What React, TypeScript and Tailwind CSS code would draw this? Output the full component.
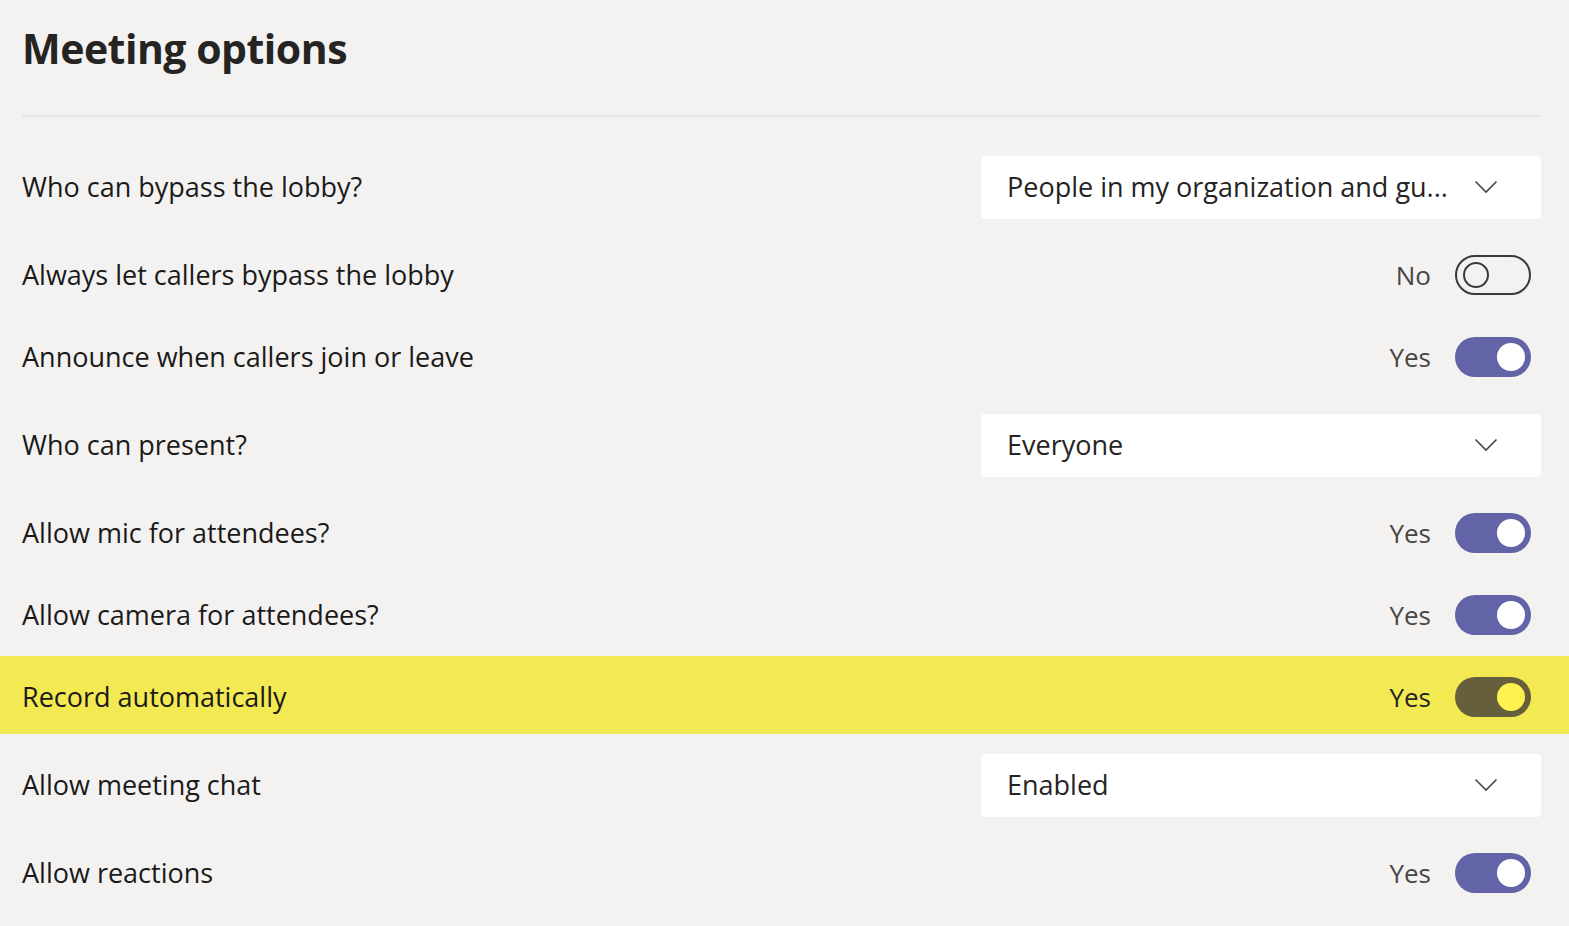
import { useState } from "react"

type row = {
    label: string,
    kind: "select" | "toggle",
    value?: string,
    on?: boolean,
    highlight?: boolean
}

const rows: row[] = [
    { label: "Who can bypass the lobby?", kind: "select", value: "People in my organization and gu..." },
    { label: "Always let callers bypass the lobby", kind: "toggle", on: false },
    { label: "Announce when callers join or leave", kind: "toggle", on: true },
    { label: "Who can present?", kind: "select", value: "Everyone" },
    { label: "Allow mic for attendees?", kind: "toggle", on: true },
    { label: "Allow camera for attendees?", kind: "toggle", on: true },
    { label: "Record automatically", kind: "toggle", on: true, highlight: true },
    { label: "Allow meeting chat", kind: "select", value: "Enabled" },
    { label: "Allow reactions", kind: "toggle", on: true },
]

function Chevron() {
    return (
        <svg width="24" height="14" viewBox="0 0 24 14" fill="none">
            <path d="M1.5 1.5 L12 12 L22.5 1.5" stroke="#484644" strokeWidth="1.6" />
        </svg>
    )
}

function Toggle({ on, highlight }: { on: boolean, highlight?: boolean }) {
    if (!on) {
        return (
            <div className="w-[76px] h-[40px] rounded-full border-2 border-[#3b3a39] flex items-center pl-[6px]">
                <div className="w-[26px] h-[26px] rounded-full border-2 border-[#3b3a39]" />
            </div>
        )
    }
    return (
        <div className={`w-[76px] h-[40px] rounded-full flex items-center justify-end pr-[6px] ${highlight ? "bg-[#655f3b]" : "bg-[#6264a7]"}`}>
            <div className={`w-[28px] h-[28px] rounded-full ${highlight ? "bg-[#fff24f]" : "bg-white"}`} />
        </div>
    )
}

export default function App() {
    const [items] = useState(rows)

    return (
        <div className="min-h-screen bg-[#f3f2f1] text-[#252423] font-['Open_Sans',sans-serif] overflow-hidden">
            <div className="pl-[22px] pr-[28px] pt-[20px]">
                <div className="text-[41px] font-bold leading-[56px] tracking-[-0.5px]">Meeting options</div>
                <div className="mt-[39px] h-[2px] bg-[#e8e6e4]" />
            </div>
            <div className="pt-[23px]">
                {items.map((r, i) => {
                    if (r.kind == "select") {
                        return (
                            <div key={i} className="h-[94px] flex items-center pl-[22px] pr-[28px]">
                                <div className="flex-1 text-[27px] text-[#1b1a19]">{r.label}</div>
                                <div className="w-[560px] h-[63px] bg-white rounded-[4px] flex items-center justify-between pl-[26px] pr-[43px]">
                                    <span className="text-[27px]">{r.value}</span>
                                    <Chevron />
                                </div>
                            </div>
                        )
                    }
                    return (
                        <div key={i} className={r.highlight ? "h-[82px] pb-[4px]" : "h-[82px]"}>
                            <div className={`h-full flex items-center pl-[22px] pr-[38px] ${r.highlight ? "bg-[#f3e952] pt-[4px]" : ""}`}>
                                <div className="flex-1 text-[27px] text-[#1b1a19]">{r.label}</div>
                                <span className={`text-[26px] mr-[24px] ${r.highlight ? "text-[#252423]" : "text-[#484644]"}`}>{r.on ? "Yes" : "No"}</span>
                                <Toggle on={!!r.on} highlight={r.highlight} />
                            </div>
                        </div>
                    )
                })}
            </div>
        </div>
    )
}
